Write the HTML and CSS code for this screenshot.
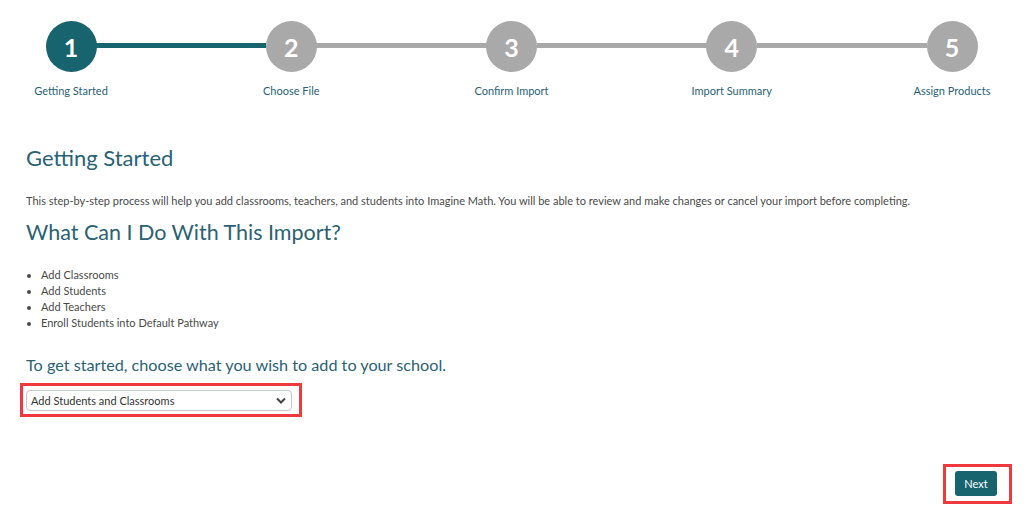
FILE: index.html
```html
<!DOCTYPE html>
<html lang="en">
<head>
  <meta charset="UTF-8" />
  <title>Import Wizard - Getting Started</title>
  <link rel="stylesheet" href="styles.css">
</head>
<body>

  <!-- Stepper -->
  <ol class="steps">
    <li class="step done">
      <span class="step-num">1</span>
      <span class="step-label">Getting Started</span>
    </li>
    <li class="step-line done"></li>
    <li class="step">
      <span class="step-num">2</span>
      <span class="step-label">Choose File</span>
    </li>
    <li class="step-line"></li>
    <li class="step">
      <span class="step-num">3</span>
      <span class="step-label">Confirm Import</span>
    </li>
    <li class="step-line"></li>
    <li class="step">
      <span class="step-num">4</span>
      <span class="step-label">Import Summary</span>
    </li>
    <li class="step-line"></li>
    <li class="step">
      <span class="step-num">5</span>
      <span class="step-label">Assign Products</span>
    </li>
  </ol>

  <main class="content">
    <h2 class="title">Getting Started</h2>
    <p class="intro">This step-by-step process will help you add classrooms, teachers, and students into Imagine Math. You will be able to review and make changes or cancel your import before completing.</p>

    <h2 class="title title-lg">What Can I Do With This Import?</h2>
    <ul class="features">
      <li>Add Classrooms</li>
      <li>Add Students</li>
      <li>Add Teachers</li>
      <li>Enroll Students into Default Pathway</li>
    </ul>

    <h3 class="prompt">To get started, choose what you wish to add to your school.</h3>
    <div class="highlight highlight-select">
      <select class="picker">
        <option>Add Students and Classrooms</option>
        <option>Add Students</option>
        <option>Add Teachers</option>
      </select>
    </div>
  </main>

  <div class="actions">
    <div class="highlight highlight-btn">
      <button class="btn-next">Next</button>
    </div>
  </div>

</body>
</html>
```

FILE: styles.css
```css
* {
  margin: 0;
  padding: 0;
  box-sizing: border-box;
}

:root {
  --teal: #17636e;
  --teal-text: #2a6274;
  --gray: #a9a9a9;
  --text: #4a4a4a;
  --red: #f0393f;
}

body {
  font-family: 'Lato', 'Open Sans', sans-serif;
  color: var(--text);
  background: #fff;
  padding-top: 21px;
}

/* Stepper */
.steps {
  list-style: none;
  display: flex;
  align-items: flex-start;
  margin: 0 37px 0 26px;
}

.step {
  width: 90px;
  display: flex;
  flex-direction: column;
  align-items: center;
  position: relative;
  z-index: 1;
}

.step-num {
  width: 51px;
  height: 51px;
  border-radius: 50%;
  background: var(--gray);
  color: #fff;
  font-weight: 700;
  font-size: 25px;
  display: flex;
  align-items: center;
  justify-content: center;
}

.step.done .step-num {
  background: var(--teal);
}

.step-label {
  margin-top: 12px;
  font-size: 11px;
  color: var(--teal-text);
  white-space: nowrap;
}

.step-line {
  flex: 1;
  height: 5px;
  margin: 22px -20px 0;
  background: var(--gray);
}

.step-line.done {
  background: var(--teal);
}

/* Content */
.content {
  padding: 0 26px;
}

.title {
  margin-top: 48px;
  font-size: 22px;
  font-weight: 400;
  color: var(--teal-text);
  line-height: 26px;
}

.intro {
  margin-top: 22px;
  font-size: 11px;
  line-height: 16px;
}

.title-lg {
  margin-top: 10px;
  font-size: 21.5px;
}

.features {
  margin-top: 22px;
  padding-left: 15px;
  font-size: 11px;
  line-height: 16px;
}

.prompt {
  margin-top: 24px;
  font-size: 16.2px;
  font-weight: 400;
  color: var(--teal-text);
}

/* Red annotation boxes */
.highlight {
  border: 3px solid var(--red);
}

.highlight-select {
  display: inline-block;
  margin: 9px 0 0 -6px;
  padding: 4px 7px 3px 3px;
}

.picker {
  display: block;
  width: 266px;
  height: 21px;
  padding: 0 20px 0 4px;
  font-family: 'Lato', 'Open Sans', sans-serif;
  font-size: 11px;
  color: #333;
  border: 1px solid #c9c9c9;
  border-radius: 4px;
  background: #fff url("data:image/svg+xml,%3Csvg xmlns='http://www.w3.org/2000/svg' width='10' height='7' viewBox='0 0 10 7'%3E%3Cpath d='M1 1.5l4 4 4-4' fill='none' stroke='%23444' stroke-width='2'/%3E%3C/svg%3E") no-repeat right 5px center;
  appearance: none;
}

.actions {
  display: flex;
  justify-content: flex-end;
  padding: 47px 22px 0 0;
}

.highlight-btn {
  padding: 4px 12px 5px 9px;
}

.btn-next {
  display: block;
  width: 42px;
  height: 25px;
  border: 0;
  border-radius: 3px;
  background: var(--teal);
  color: #fff;
  font-family: 'Lato', 'Open Sans', sans-serif;
  font-size: 11px;
  cursor: pointer;
}
```
